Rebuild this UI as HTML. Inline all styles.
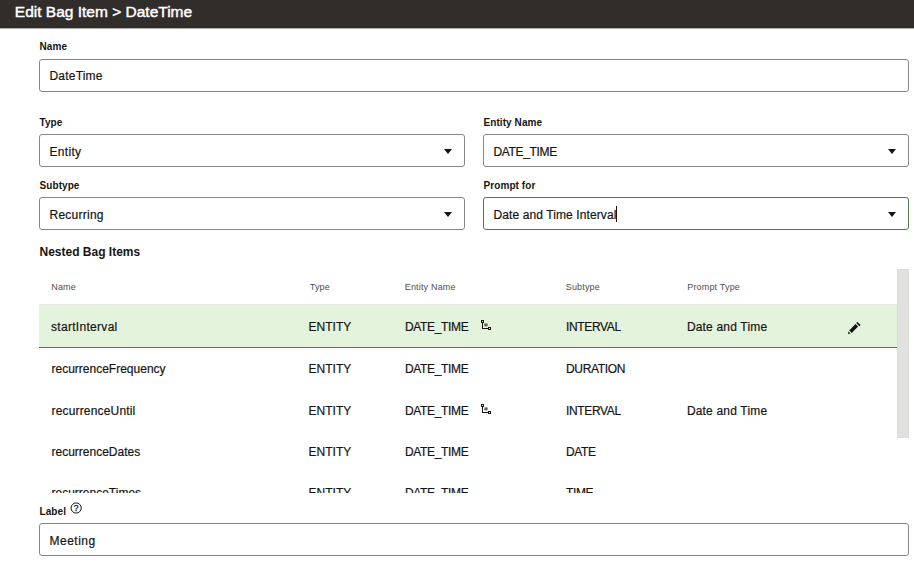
<!DOCTYPE html>
<html>
<head>
<meta charset="utf-8">
<title>Edit Bag Item</title>
<style>
  html, body { margin: 0; padding: 0; }
  body {
    width: 914px; height: 563px; overflow: hidden; position: relative;
    background: #ffffff;
    font-family: "Liberation Sans", sans-serif;
    color: #161513;
    font-size: 12px;
  }
  .abs { position: absolute; white-space: nowrap; }
  #hdr { left: 0; top: 0; width: 914px; height: 28px; background: #312d2a; border-bottom: 1px solid #b0aeac; }
  #title { left: 14.8px; top: 1.5px; font-size: 15.5px; -webkit-text-stroke: 0.45px #ffffff; color: #ffffff; line-height: 19px; }
  .lbl { font-size: 10px; font-weight: bold; letter-spacing: 0.08px; line-height: 12px; color: #161513; }
  .box {
    box-sizing: border-box; height: 33px; border: 1px solid #8a8885; border-radius: 3px;
    background: #fff; padding-left: 9.5px; line-height: 31px; font-size: 12px; -webkit-text-stroke: 0.2px #161513;
  }
  .box.focus { border-color: #587649; }
  .box.sel { padding-top: 2px; }
  .box.inp { padding-top: 1px; }
  .arrow { width: 0; height: 0; border-left: 4.8px solid transparent; border-right: 4.8px solid transparent; border-top: 5px solid #161513; }
  .h2 { font-size: 12px; font-weight: bold; line-height: 14px; }
  .th { font-size: 9px; color: #504e4b; line-height: 11px; letter-spacing: 0.18px; margin-top: 0.5px; margin-left: -0.3px; }
  .td { font-size: 12px; line-height: 14px; -webkit-text-stroke: 0.2px #161513; }
  .up { letter-spacing: -0.35px; }
  .ent { letter-spacing: 0; margin-left: -0.9px; }
  .lc { letter-spacing: 0.18px; margin-left: -0.6px; }
</style>
</head>
<body>
  <div id="hdr" class="abs"></div>
  <div id="title" class="abs">Edit Bag Item &gt; DateTime</div>

  <div class="abs lbl" style="left:39.5px; top:41px;">Name</div>
  <div class="abs box inp" style="left:39px; top:59px; width:870px; letter-spacing:0.2px;">DateTime</div>

  <div class="abs lbl" style="left:39.5px; top:117px;">Type</div>
  <div class="abs box sel" style="left:39px; top:134px; width:426px; letter-spacing:0.3px;">Entity</div>
  <div class="abs arrow" style="left:443.8px; top:148.6px;"></div>

  <div class="abs lbl" style="left:483.5px; top:117px;">Entity Name</div>
  <div class="abs box sel up" style="left:483px; top:134px; width:426px;">DATE_TIME</div>
  <div class="abs arrow" style="left:887.8px; top:148.6px;"></div>

  <div class="abs lbl" style="left:39.5px; top:180px;">Subtype</div>
  <div class="abs box sel" style="left:39px; top:197px; width:426px; letter-spacing:0.25px;">Recurring</div>
  <div class="abs arrow" style="left:443.8px; top:211.6px;"></div>

  <div class="abs lbl" style="left:483.5px; top:180px;">Prompt for</div>
  <div class="abs box sel focus" style="left:483px; top:197px; width:426px; letter-spacing:0.1px;">Date and Time Interval</div>
  <div class="abs" style="left:616px; top:206px; width:1px; height:16px; background:#161513;"></div>
  <div class="abs arrow" style="left:887.8px; top:211.6px;"></div>

  <div class="abs h2" style="left:39.5px; top:245px;">Nested Bag Items</div>

  <!-- table area (clipped) -->
  <div class="abs" id="tbl" style="left:0; top:268px; width:914px; height:225.4px; overflow:hidden;">
    <!-- header -->
    <div class="abs th" style="left:51.5px; top:13px;">Name</div>
    <div class="abs th" style="left:310px; top:13px;">Type</div>
    <div class="abs th" style="left:405px; top:13px;">Entity Name</div>
    <div class="abs th" style="left:566px; top:13px;">Subtype</div>
    <div class="abs th" style="left:687.5px; top:13px;">Prompt Type</div>

    <!-- selected row -->
    <div class="abs" style="left:39px; top:36px; width:858px; height:43.5px; background:#e4f3dc; border-bottom:1px solid #587649; box-sizing:border-box; border-top:1px solid #e6e6e4;"></div>

    <!-- row 1 : baseline 331 => top offset -->
    <div class="abs td" style="left:51px; top:52px; letter-spacing:0.3px;">startInterval</div>
    <div class="abs td ent" style="left:309.5px; top:52px;">ENTITY</div>
    <div class="abs td up" style="left:405px; top:52px;">DATE_TIME</div>
    <div class="abs td up" style="left:566px; top:52px;">INTERVAL</div>
    <div class="abs td lc" style="left:687.5px; top:52px;">Date and Time</div>

    <div class="abs td" style="left:51.5px; top:93.7px;">recurrenceFrequency</div>
    <div class="abs td ent" style="left:309.5px; top:93.7px;">ENTITY</div>
    <div class="abs td up" style="left:405px; top:93.7px;">DATE_TIME</div>
    <div class="abs td up" style="left:566px; top:93.7px;">DURATION</div>

    <div class="abs td" style="left:51.5px; top:136.3px; letter-spacing:0.17px;">recurrenceUntil</div>
    <div class="abs td ent" style="left:309.5px; top:136.3px;">ENTITY</div>
    <div class="abs td up" style="left:405px; top:136.3px;">DATE_TIME</div>
    <div class="abs td up" style="left:566px; top:136.3px;">INTERVAL</div>
    <div class="abs td lc" style="left:687.5px; top:136.3px;">Date and Time</div>

    <div class="abs td" style="left:51.5px; top:177.1px;">recurrenceDates</div>
    <div class="abs td ent" style="left:309.5px; top:177.1px;">ENTITY</div>
    <div class="abs td up" style="left:405px; top:177.1px;">DATE_TIME</div>
    <div class="abs td up" style="left:566px; top:177.1px;">DATE</div>

    <div class="abs td" style="left:51.5px; top:217.6px;">recurrenceTimes</div>
    <div class="abs td ent" style="left:309.5px; top:217.6px;">ENTITY</div>
    <div class="abs td up" style="left:405px; top:217.6px;">DATE_TIME</div>
    <div class="abs td up" style="left:566px; top:217.6px;">TIME</div>

    <!-- tree icons -->
    <svg class="abs" style="left:480px; top:51px;" width="13" height="13" viewBox="0 0 13 13" shape-rendering="crispEdges">
      <rect x="2" y="4" width="1" height="6" fill="#161513"/>
      <rect x="2" y="9" width="6" height="1" fill="#161513"/>
      <rect x="1.5" y="1.5" width="2" height="2" fill="#e4f3dc" stroke="#161513" stroke-width="1"/>
      <rect x="8.5" y="8.5" width="2" height="2" fill="#e4f3dc" stroke="#161513" stroke-width="1"/>
      <g shape-rendering="auto"><rect x="4.3" y="4.3" width="3.4" height="3.1" rx="1.2" fill="#7fa0c0"/><rect x="4.6" y="4.4" width="0.9" height="2.9" rx="0.4" fill="#6a2f1c"/><rect x="6.4" y="4.4" width="0.9" height="2.9" rx="0.4" fill="#6a2f1c"/></g>
    </svg>
    <svg class="abs" style="left:480px; top:135px;" width="13" height="13" viewBox="0 0 13 13" shape-rendering="crispEdges">
      <rect x="2" y="4" width="1" height="6" fill="#161513"/>
      <rect x="2" y="9" width="6" height="1" fill="#161513"/>
      <rect x="1.5" y="1.5" width="2" height="2" fill="#ffffff" stroke="#161513" stroke-width="1"/>
      <rect x="8.5" y="8.5" width="2" height="2" fill="#ffffff" stroke="#161513" stroke-width="1"/>
      <g shape-rendering="auto"><rect x="4.3" y="4.3" width="3.4" height="3.1" rx="1.2" fill="#7fa0c0"/><rect x="4.6" y="4.4" width="0.9" height="2.9" rx="0.4" fill="#6a2f1c"/><rect x="6.4" y="4.4" width="0.9" height="2.9" rx="0.4" fill="#6a2f1c"/></g>
    </svg>

    <!-- pencil -->
    <svg class="abs" style="left:847px; top:53px;" width="15" height="15" viewBox="0 0 15 15">
      <path d="M2.2 9.4 L8.5 3.1 L11.1 5.6 L4.7 12 Z" fill="#161513"/>
      <path d="M0.9 13.1 L1.55 10.5 L3.55 12.5 Z" fill="#161513"/>
      <path d="M10.3 2.0 L12.5 4.2" fill="none" stroke="#161513" stroke-width="1.7" stroke-linecap="round"/>
    </svg>

    <!-- scrollbar -->
    <div class="abs" style="left:897px; top:1px; width:12px; height:168.5px; background:#e1e1df; box-sizing:border-box; border:1px solid #dcdcda;"></div>
  </div>

  <div class="abs lbl" style="left:39.5px; top:506px;">Label</div>
  <svg class="abs" style="left:70px; top:501px;" width="13" height="13" viewBox="0 0 13 13">
    <circle cx="6.15" cy="7.0" r="5.1" fill="none" stroke="#161513" stroke-width="1"/>
    <text x="6.15" y="10" font-size="8.5" text-anchor="middle" font-family="Liberation Sans, sans-serif" fill="#161513" stroke="#161513" stroke-width="0.25">?</text>
  </svg>
  <div class="abs box inp" style="left:39px; top:523px; width:870px; letter-spacing:0.5px; padding-top:1.5px;">Meeting</div>
</body>
</html>
